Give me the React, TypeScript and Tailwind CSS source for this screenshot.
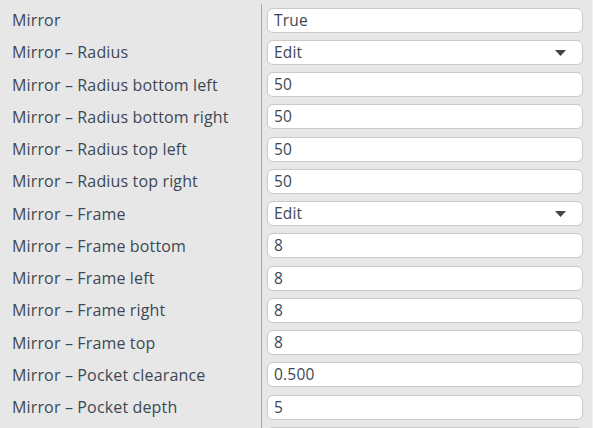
import { FC } from "react";

type Row = { label: string; value: string; select?: boolean };

const rows: Row[] = [
  { label: "Mirror", value: "True" },
  { label: "Mirror – Radius", value: "Edit", select: true },
  { label: "Mirror – Radius bottom left", value: "50" },
  { label: "Mirror – Radius bottom right", value: "50" },
  { label: "Mirror – Radius top left", value: "50" },
  { label: "Mirror – Radius top right", value: "50" },
  { label: "Mirror – Frame", value: "Edit", select: true },
  { label: "Mirror – Frame bottom", value: "8" },
  { label: "Mirror – Frame left", value: "8" },
  { label: "Mirror – Frame right", value: "8" },
  { label: "Mirror – Frame top", value: "8" },
  { label: "Mirror – Pocket clearance", value: "0.500" },
  { label: "Mirror – Pocket depth", value: "5" },
  // partly visible row at the bottom edge, text falls below the fold
  { label: "", value: "" },
];

const PropertyRow: FC<{ row: Row }> = ({ row }) => (
  <div className="flex h-[32.25px] shrink-0 items-center">
    <div className="w-[261px] shrink-0 pl-3 text-[16px] tracking-[0.15px] text-[#3d4754]">{row.label}</div>
    <div className="flex h-full w-px shrink-0 bg-[#a8a8a8]" />
    <div className="flex h-full flex-1 items-center pl-[5px] pr-[9px]">
      <div className="flex h-[25px] w-full items-center justify-between rounded-[6px] border border-[#c9c9c9] bg-white pl-[6px] pr-[16px] text-[15.5px] tracking-[0.2px] text-[#3d4754]">
        <span>{row.value}</span>
        {row.select && (
          <svg width="11" height="6" viewBox="0 0 11 6" className="mt-[1px]">
            <path d="M0 0 H11 L5.5 6 Z" fill="#444" />
          </svg>
        )}
      </div>
    </div>
  </div>
);

const App: FC = () => (
  <div
    className="flex h-[428px] w-[593px] flex-col overflow-hidden bg-[#e7e7e7]"
    style={{ fontFamily: '"Open Sans", sans-serif' }}
  >
    <div className="flex flex-col border-r border-[#f2f2f2] pt-[4px]">
      {rows.map((r, i) => (
        <PropertyRow key={i} row={r} />
      ))}
    </div>
  </div>
);

export default App;
